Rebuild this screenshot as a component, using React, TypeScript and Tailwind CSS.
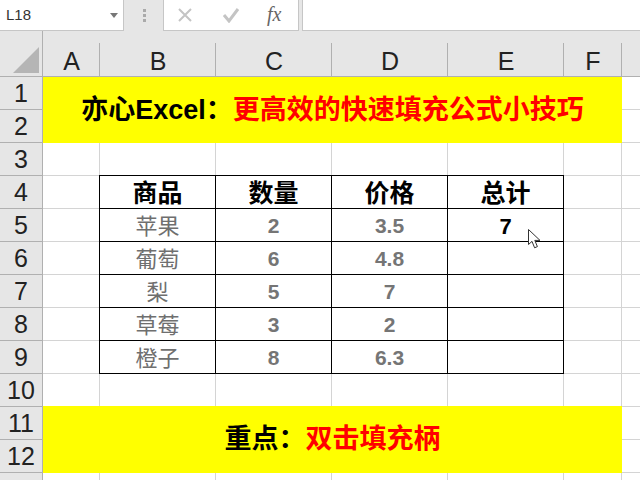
const sans = "font-['Liberation_Sans','Noto_Sans_CJK_SC',sans-serif]";

const columns = ["A", "B", "C", "D", "E", "F"];
const rowNumbers = [1, 2, 3, 4, 5, 6, 7, 8, 9, 10, 11, 12];
const rows = [
  ["苹果", "2", "3.5", "7"],
  ["葡萄", "6", "4.8", ""],
  ["梨", "5", "7", ""],
  ["草莓", "3", "2", ""],
  ["橙子", "8", "6.3", ""],
];

function Toolbar() {
  return (
    <div className="flex h-[31px] bg-[#e6e6e6]">
      <div className="w-[124px] h-[31px] bg-white border-r border-b border-[#c6c6c6] flex items-center justify-between pl-[6px] pr-[5px]">
        <span className="text-[15px] text-[#333]">L18</span>
        <svg width="8" height="5" viewBox="0 0 8 5" className="mt-[1px]">
          <path d="M0 0h8L4 5z" fill="#777" />
        </svg>
      </div>
      <div className="w-[39px] flex flex-col items-center justify-center gap-[2px] pl-[1px]">
        <i className="w-[3px] h-[3px] bg-[#aaa]" />
        <i className="w-[3px] h-[3px] bg-[#aaa]" />
        <i className="w-[3px] h-[3px] bg-[#aaa]" />
      </div>
      <div className="w-[136px] h-[31px] bg-white border-l border-r border-b border-[#c6c6c6] flex items-center">
        <svg width="16" height="16" viewBox="0 0 16 16" className="ml-[13px]">
          <path d="M2 2l12 12M14 2L2 14" stroke="#c4c4c4" strokeWidth="2" fill="none" />
        </svg>
        <svg width="18" height="16" viewBox="0 0 18 16" className="ml-[29px]">
          <path d="M2 8l5 6L16 2" stroke="#c4c4c4" strokeWidth="3" fill="none" />
        </svg>
        <span className="ml-[27px] mb-[2px] font-['Liberation_Serif',serif] italic text-[20px] text-[#666]">
          fx
        </span>
      </div>
      <div className="w-[3px]" />
      <div className="flex-1 h-[31px] bg-white border-l border-b border-[#c6c6c6]" />
    </div>
  );
}

function Cursor() {
  return (
    <svg
      width="14"
      height="20"
      viewBox="0 0 14 20"
      className="absolute z-20 left-[528px] top-[229px]"
    >
      <path
        d="M0.5 0.5V15.5L4 12.4L6.6 18.8L9.4 17.6L6.8 11.4H12z"
        fill="#fff"
        stroke="#333"
        strokeWidth="1"
      />
    </svg>
  );
}

export default function App() {
  return (
    <div className={`relative w-[640px] h-[480px] overflow-hidden bg-white ${sans}`}>
      <Toolbar />
      <div className="grid grid-cols-[43px_57px_116px_116px_116px_116px_58px_18px] grid-rows-[46px_repeat(12,33px)_7px] h-[449px]">
        {/* header strip */}
        <div className="col-start-1 row-start-1 bg-[#e6e6e6] border-b border-r border-[#b0b0b0] relative">
          <svg width="26" height="26" viewBox="0 0 26 26" className="absolute left-[13px] top-[16px]">
            <path d="M26 0V26H0z" fill="#b5b5b5" />
          </svg>
        </div>
        {columns.map((c) => (
          <div
            key={c}
            className="row-start-1 bg-[#e6e6e6] border-b border-[#b0b0b0] flex items-end justify-center text-[25px] leading-[30px] text-[#222] relative after:absolute after:right-0 after:bottom-0 after:top-[12px] after:w-px after:bg-[#b0b0b0]"
          >
            {c}
          </div>
        ))}
        <div className="row-start-1 bg-[#e6e6e6] border-b border-[#b0b0b0]" />

        {rowNumbers.map((n) => (
          <div
            key={n}
            style={{ gridRow: n + 1 }}
            className="col-start-1 flex items-center justify-center pt-[2px] bg-[#e6e6e6] border-r border-b border-[#b0b0b0] text-[25px] text-[#222]"
          >
            {n}
          </div>
        ))}
        <div className="col-start-1 row-start-14 bg-[#e6e6e6] border-r border-[#b0b0b0]" />

        {/* blank cells */}
        {[4, 5, 6, 7, 8, 9, 10, 11].map((r) =>
          [2, 3, 4, 5, 6, 7, 8].map((c) => (
            <div
              key={`${r}-${c}`}
              style={{ gridRow: r, gridColumn: c }}
              className={c === 8 ? "border-b border-[#d4d4d4]" : "border-r border-b border-[#d4d4d4]"}
            />
          )),
        )}
        {[2, 3, 4, 5, 6, 7].map((c) => (
          <div
            key={`last-${c}`}
            style={{ gridRow: 14, gridColumn: c }}
            className="border-r border-[#d4d4d4]"
          />
        ))}
        {[2, 3, 12, 13].map((r) => (
          <div
            key={`g${r}`}
            style={{ gridRow: r, gridColumn: 8 }}
            className="border-b border-[#d4d4d4]"
          />
        ))}

        {/* title banners */}
        <div className="col-start-2 col-span-6 row-start-2 row-span-2 bg-[#ffff00] flex items-center justify-center text-[27px] font-bold text-black">
          亦心Excel：<span className="text-[#ff0000]">更高效的快速填充公式小技巧</span>
        </div>
        <div className="col-start-2 col-span-6 row-start-12 row-span-2 -mt-px bg-[#ffff00] flex items-center justify-center text-[27px] font-bold text-black">
          重点：<span className="text-[#ff0000]">双击填充柄</span>
        </div>

        {/* data table */}
        <div className="col-start-3 col-span-4 row-start-5 row-span-6 z-10 grid grid-cols-[repeat(4,116px)] grid-rows-[repeat(6,33px)] bg-white -ml-px -mt-px border-l border-t border-black">
          {["商品", "数量", "价格", "总计"].map((h) => (
            <div
              key={h}
              className="border-r border-b border-black flex items-center justify-center pt-[4px] text-[25px] font-bold text-black"
            >
              {h}
            </div>
          ))}
          {rows.map((row) =>
            row.map((v, i) => (
              <div
                key={`${row[0]}-${i}`}
                className={`border-r border-b border-black flex items-center justify-center pt-[2px] ${
                  i === 0
                    ? "text-[22px] text-[#6f6f6f]"
                    : i === 3
                      ? "text-[22px] font-bold text-black"
                      : "text-[21px] font-bold text-[#757575]"
                }`}
              >
                {v}
              </div>
            )),
          )}
        </div>
      </div>
      <Cursor />
    </div>
  );
}
